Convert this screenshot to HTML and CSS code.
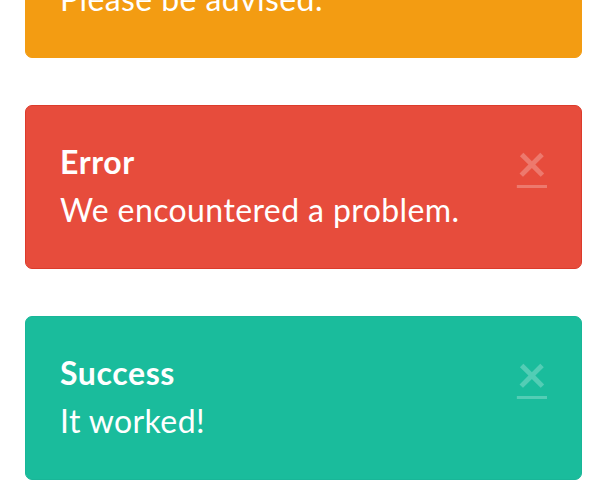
FILE: index.html
```html
<!DOCTYPE html>
<html lang="en">
<head>
<meta charset="utf-8">
<title>Alerts</title>
<link rel="stylesheet" href="styles.css">
</head>
<body>
<div class="stack">
  <div class="alert alert-warning">
    <a class="close" href="#">&times;</a>
    <div class="title">Warning</div>
    <div class="msg">Please be advised.</div>
  </div>
  <div class="alert alert-error">
    <a class="close" href="#">&times;</a>
    <div class="title">Error</div>
    <div class="msg">We encountered a problem.</div>
  </div>
  <div class="alert alert-success">
    <a class="close" href="#">&times;</a>
    <div class="title">Success</div>
    <div class="msg">It worked!</div>
  </div>
</div>
</body>
</html>
```
FILE: styles.css
```css
html, body {
  margin: 0;
  padding: 0;
  background: #fff;
  overflow: hidden;
}
body {
  font-family: Lato, "Open Sans", sans-serif;
  color: #fff;
}
.stack {
  width: 557px;
  margin: -106px 0 0 25px;
  display: flex;
  flex-direction: column;
  gap: 47px;
}
.alert {
  box-sizing: border-box;
  height: 164px;
  padding: 36px 34px 0 34px;
  border: 1px solid;
  border-radius: 7px;
}
.alert-warning { background: #f39c12; border-color: #f39c12; }
.alert-error { background: #e74c3c; border-color: #dc3b2b; }
.alert-success { background: #1abc9c; border-color: #19b698; }
.title {
  font-size: 32px;
  line-height: 40px;
  font-weight: 700;
  letter-spacing: 0.6px;
  margin-bottom: 8px;
}
.msg {
  font-size: 32px;
  line-height: 40px;
  font-weight: 400;
  letter-spacing: 0.4px;
}
.close {
  float: right;
  margin-top: 0;
  font-size: 52px;
  line-height: 40px;
  font-weight: 700;
  color: rgba(255,255,255,0.25);
  text-decoration: underline;
  text-decoration-thickness: 3px;
  text-underline-offset: 3px;
}
```
